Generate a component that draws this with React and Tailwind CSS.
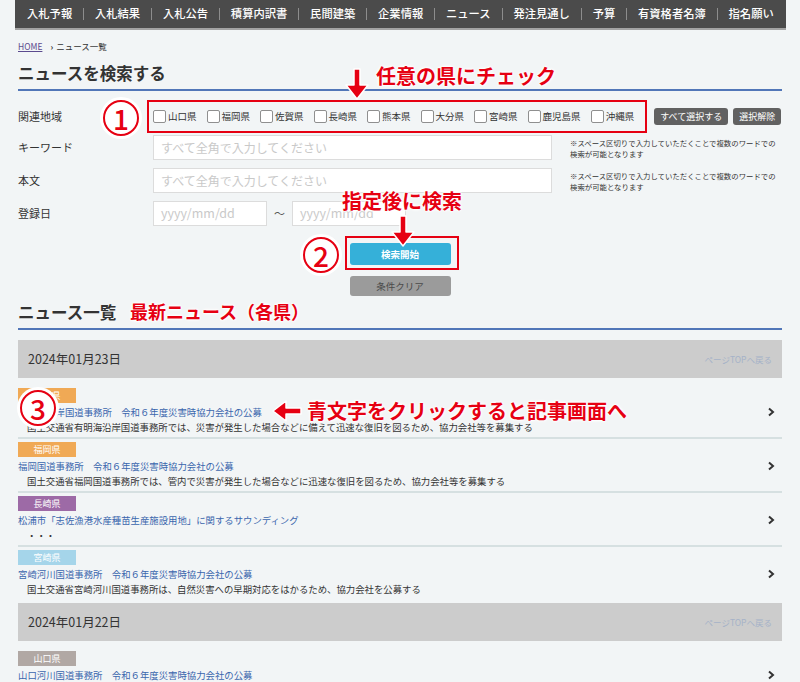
import React from 'react';

const navItems = ['入札予報', '入札結果', '入札公告', '積算内訳書', '民間建築', '企業情報', 'ニュース', '発注見通し', '予算', '有資格者名簿', '指名願い'];
const prefs = ['山口県', '福岡県', '佐賀県', '長崎県', '熊本県', '大分県', '宮崎県', '鹿児島県', '沖縄県'];

const groups = [
  {
    date: '2024年01月23日',
    items: [
      { tag: '福岡県', color: 'bg-[#f0a955]', title: '有明海沿岸国道事務所　令和６年度災害時協力会社の公募', desc: '国土交通省有明海沿岸国道事務所では、災害が発生した場合などに備えて迅速な復旧を図るため、協力会社等を募集する' },
      { tag: '福岡県', color: 'bg-[#f0a955]', title: '福岡国道事務所　令和６年度災害時協力会社の公募', desc: '国土交通省福岡国道事務所では、管内で災害が発生した場合などに迅速な復旧を図るため、協力会社等を募集する' },
      { tag: '長崎県', color: 'bg-[#9d6aa6]', title: '松浦市「志佐漁港水産種苗生産施設用地」に関するサウンディング', desc: '・・・' },
      { tag: '宮崎県', color: 'bg-[#a5d5ea]', title: '宮崎河川国道事務所　令和６年度災害時協力会社の公募', desc: '国土交通省宮崎河川国道事務所は、自然災害への早期対応をはかるため、協力会社を公募する' },
    ],
  },
  {
    date: '2024年01月22日',
    items: [
      { tag: '山口県', color: 'bg-[#b1a8a4]', title: '山口河川国道事務所　令和６年度災害時協力会社の公募', desc: '国土交通省山口河川国道事務所では、災害が発生した場合などに迅速な復旧を図るため、協力会社を公募する' },
    ],
  },
];

const halo = '[text-shadow:0_0_2px_#fff,0_0_2px_#fff,0_0_3px_#fff,0_0_3px_#fff,0_0_4px_#fff]';

const Chevron = () => (
  <svg width="8" height="10" viewBox="0 0 8 10" className="shrink-0">
    <polyline points="2,1.5 6,5 2,8.5" fill="none" stroke="#333" strokeWidth="2" />
  </svg>
);

const Circled = ({ n, className }) => (
  <div className={`absolute w-[36px] h-[36px] rounded-full border-[2.5px] border-[#e60012] bg-white shadow-[0_0_0_3px_#fff] flex items-center justify-center text-[#e60012] text-[28px] font-medium leading-none ${className}`}>
    {n}
  </div>
);

const DownArrow = ({ className }) => (
  <svg width="24" height="32" viewBox="0 0 24 32" className={`absolute ${className}`}>
    <path d="M9 1 H15 V17 H23 L12 31 L1 17 H9 Z" fill="#e60012" stroke="#fff" strokeWidth="1.5" strokeLinejoin="round" />
  </svg>
);

export default function App() {
  return (
    <div className="relative w-full min-h-[682px] overflow-hidden bg-[#f2f5f6] font-['Noto_Sans_CJK_JP',sans-serif] text-[#333]">
      <div className="w-[771px] ml-[15px]">
        {/* グローバルナビ */}
        <nav className="flex items-center justify-between h-[30px] px-[12px] bg-[#4b4b4b] border-b-2 border-[#a3a3a3]">
          {navItems.map((item, i) => (
            <React.Fragment key={item}>
              {i > 0 && <span className="w-px h-[12px] bg-[#8d8d8d]" />}
              <span className="text-white text-[11.3px] font-medium leading-none">{item}</span>
            </React.Fragment>
          ))}
        </nav>

        <div className="pl-[3px] pr-[4px]">
          {/* パンくず */}
          <div className="flex items-center h-[12px] mt-[10px] text-[8.5px]">
            <span className="text-[#5b4a8e] underline">HOME</span>
            <span className="ml-[8px] font-bold">›</span>
            <span className="ml-[3px]">ニュース一覧</span>
          </div>

          <h2 className="mt-[9px] pb-[4px] border-b-2 border-[#5176b8] text-[16.5px] font-bold leading-[24px]">ニュースを検索する</h2>

          {/* 検索フォーム */}
          <div className="mt-[13px] text-[11px]">
            <div className="flex items-center h-[25px]">
              <div className="w-[135px] shrink-0">関連地域</div>
              <div className="flex items-center gap-[10px]">
                {prefs.map((p) => (
                  <label key={p} className="flex items-center">
                    <span className="w-[13px] h-[13px] bg-white border border-[#8f8f8f] rounded-[2px]" />
                    <span className="ml-[2px] text-[9.5px]">{p}</span>
                  </label>
                ))}
              </div>
              <button className="ml-[20px] h-[17px] px-[6px] rounded-[3px] bg-[#616161] text-white text-[9px] leading-none">すべて選択する</button>
              <button className="ml-[5px] h-[17px] px-[6px] rounded-[3px] bg-[#616161] text-white text-[9px] leading-none">選択解除</button>
            </div>

            {['キーワード', '本文'].map((label, i) => (
              <div key={label} className={`flex items-center ${i === 0 ? 'mt-[6px]' : 'mt-[8px]'}`}>
                <div className="w-[135px] shrink-0">{label}</div>
                <div className="w-[399px] h-[25px] bg-white border border-[#dcdcdc] flex items-center pl-[7px] text-[12px] text-[#c9c9c9]">すべて全角で入力してください</div>
                <p className="ml-[18px] text-[7.4px] leading-[11px]">※スペース区切りで入力していただくことで複数のワードでの<br />検索が可能となります</p>
              </div>
            ))}

            <div className="flex items-center mt-[8px]">
              <div className="w-[135px] shrink-0">登録日</div>
              <div className="w-[114px] h-[25px] bg-white border border-[#dcdcdc] flex items-center pl-[7px] text-[12.5px] text-[#c9c9c9]">yyyy/mm/dd</div>
              <span className="w-[25px] text-center text-[11px] text-[#555]">〜</span>
              <div className="w-[114px] h-[25px] bg-white border border-[#dcdcdc] flex items-center pl-[7px] text-[12.5px] text-[#c9c9c9]">yyyy/mm/dd</div>
            </div>

            <div className="flex flex-col items-center">
              <button className="mt-[17px] w-[101px] h-[22px] rounded-[3px] bg-[#35b0d9] text-white text-[9.5px] font-bold">検索開始</button>
              <button className="mt-[11px] w-[101px] h-[20px] rounded-[3px] bg-[#9b9b9b] text-[#4a4a4a] text-[9.5px]">条件クリア</button>
            </div>
          </div>

          <h2 className="mt-[4px] pb-[4px] border-b-2 border-[#5176b8] text-[16.5px] font-bold leading-[24px]">ニュース一覧</h2>

          {/* ニュース一覧 */}
          {groups.map((g, gi) => (
            <div key={g.date} className={gi === 0 ? 'mt-[10px]' : 'mt-[2px]'}>
              <div className="flex items-center justify-between h-[38px] bg-[#cccccc] pl-[10px] pr-[10px]">
                <span className="text-[12.5px]">{g.date}</span>
                <span className="text-[8.5px] text-[#a5b2c8]">ページTOPへ戻る</span>
              </div>
              <div className="pt-[7px] pb-[2px]">
                {g.items.map((it, i) => (
                  <div key={i} className={`flex items-center pt-[3px] pb-[2px] pr-[7px] ${i < g.items.length - 1 ? 'border-b-2 border-[#d6e0e1]' : ''}`}>
                    <div className="flex-1">
                      <div className={`w-[58px] h-[15px] ${it.color} text-white text-[9px] flex items-center justify-center`}>{it.tag}</div>
                      <div className="mt-[2px] h-[15px] leading-[15px] text-[9.4px] text-[#3a66ad]">{it.title}</div>
                      <div className="h-[15px] leading-[15px] pl-[9px] text-[9.4px]">{it.desc}</div>
                    </div>
                    <Chevron />
                  </div>
                ))}
              </div>
            </div>
          ))}
        </div>
      </div>

      {/* 注釈 */}
      <div className="absolute left-[147px] top-[100px] w-[500px] h-[33px] border-2 border-[#e60012]" />
      <div className="absolute left-[345px] top-[236px] w-[114px] h-[34px] border-2 border-[#e60012]" />

      <DownArrow className="left-[345px] top-[68px]" />
      <div className={`absolute left-[376px] top-[62px] text-[20px] font-bold leading-[28px] text-[#e60012] ${halo}`}>任意の県にチェック</div>

      <div className={`absolute left-[342px] top-[187px] text-[20px] font-bold leading-[28px] text-[#e60012] ${halo}`}>指定後に検索</div>
      <DownArrow className="left-[391px] top-[215px]" />

      <div className={`absolute left-[130px] top-[298px] text-[18px] font-bold leading-[26px] text-[#e60012] ${halo}`}>最新ニュース（各県）</div>

      <svg width="30" height="22" viewBox="0 0 30 22" className="absolute left-[272px] top-[400px]">
        <path d="M29 8 V14 H14 V21 L1 11 L14 1 V8 Z" fill="#e60012" stroke="#fff" strokeWidth="1.5" strokeLinejoin="round" />
      </svg>
      <div className={`absolute left-[307px] top-[397px] text-[20px] font-bold leading-[28px] text-[#e60012] ${halo}`}>青文字をクリックすると記事画面へ</div>

      <Circled n="1" className="left-[103px] top-[100px]" />
      <Circled n="2" className="left-[303px] top-[237px]" />
      <Circled n="3" className="left-[20px] top-[390px]" />
    </div>
  );
}
